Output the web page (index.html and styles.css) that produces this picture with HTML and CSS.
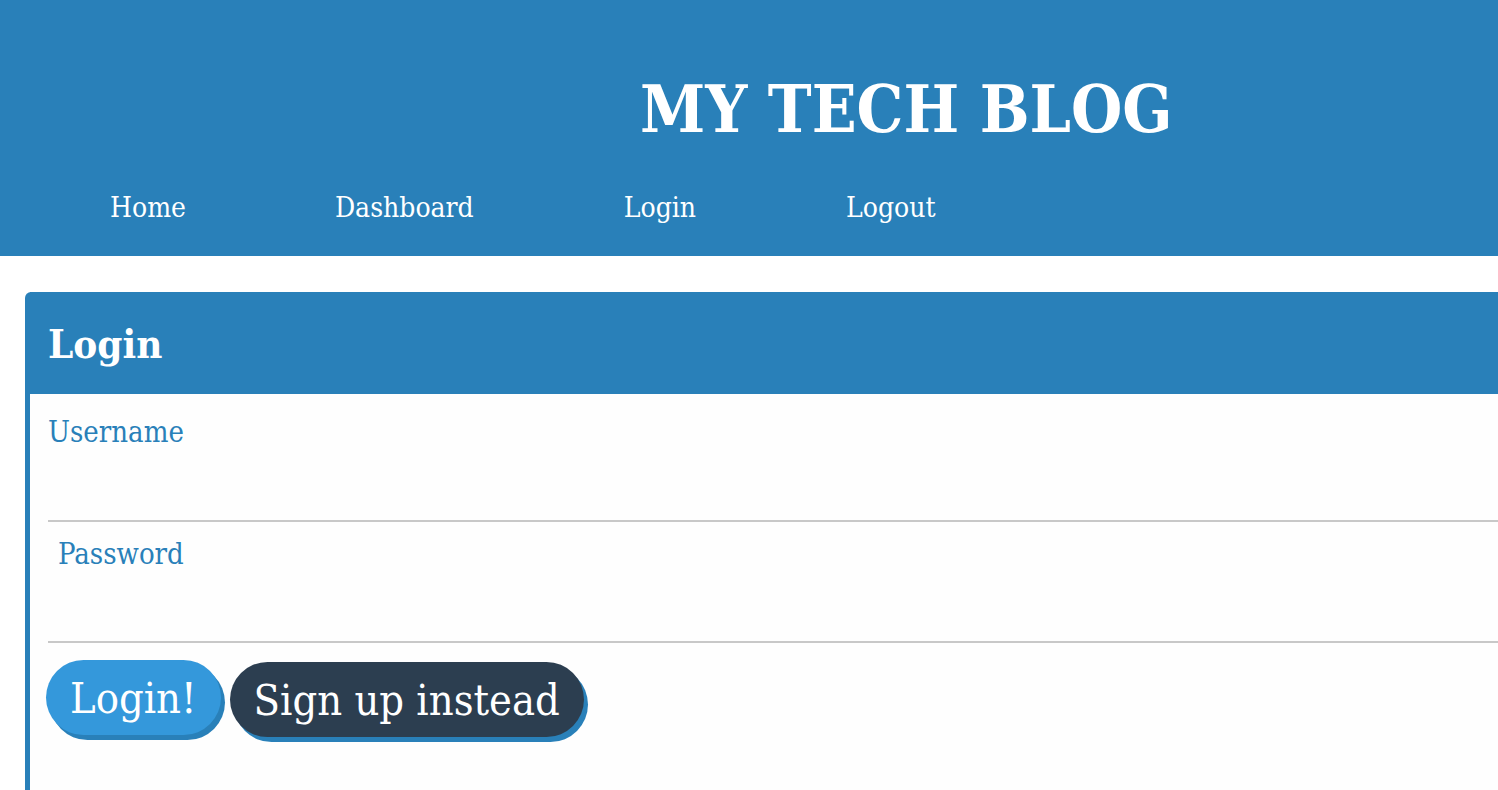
FILE: index.html
```html
<!DOCTYPE html>
<html>
<head>
<meta charset="utf-8">
<link rel="stylesheet" href="styles.css">
</head>
<body>
<header class="site-header">
  <h1 class="site-title">MY TECH BLOG</h1>
  <nav class="nav">
    <a class="nav-link nav-home" href="#">Home</a>
    <a class="nav-link nav-dash" href="#">Dashboard</a>
    <a class="nav-link nav-login" href="#">Login</a>
    <a class="nav-link nav-logout" href="#">Logout</a>
  </nav>
</header>
<main class="main">
  <section class="card">
    <div class="card-header"><h2 class="card-title">Login</h2></div>
    <form class="card-body">
      <div class="field">
        <label class="label">Username</label>
        <input class="input" type="text">
      </div>
      <div class="field field-pw">
        <label class="label">Password</label>
        <input class="input" type="password">
      </div>
      <div class="actions">
        <button class="btn btn-login" type="button">Login!</button>
        <button class="btn btn-signup" type="button">Sign up instead</button>
      </div>
    </form>
  </section>
</main>
</body>
</html>
```
FILE: styles.css
```css
html, body { margin: 0; padding: 0; overflow: hidden; }
body {
  font-family: "DejaVu Serif Condensed", "DejaVu Serif", serif;
  background: #fff;
  width: 1498px;
  height: 790px;
}
.site-header {
  background: #2980b9;
  height: 256px;
  color: #fff;
  display: flex;
  flex-direction: column;
}
.site-title {
  margin: 0;
  padding-top: 64px;
  padding-left: 640px;
  font-size: 65.5px;
  line-height: 90px;
  font-weight: bold;
  white-space: nowrap;
}
.nav {
  display: flex;
  padding-top: 36px;
  font-size: 28px;
  line-height: 36px;
}
.nav-link { color: #fff; text-decoration: none; white-space: nowrap; }
.nav-home { margin-left: 110px; }
.nav-dash { margin-left: 149px; }
.nav-login { margin-left: 150px; }
.nav-logout { margin-left: 150px; }

.main { padding-top: 36px; padding-left: 25px; }
.card {
  width: 1700px;
  height: 520px;
  background: #fefefe;
  border-left: 5px solid #2980b9;
  border-top-left-radius: 6px;
}
.card-header {
  background: #2980b9;
  height: 102px;
  display: flex;
  align-items: center;
  padding-left: 18px;
}
.card-title {
  margin: 0;
  color: #fff;
  font-size: 40px;
  font-weight: bold;
}
.card-body { padding-left: 18px; padding-top: 20px; }
.field { display: flex; flex-direction: column; }
.label {
  color: #2980b9;
  font-size: 29px;
  line-height: 36px;
  height: 36px;
}
.field-pw .label { padding-left: 10px; }
.input {
  border: none;
  border-bottom: 2px solid #c8c8c8;
  background: transparent;
  height: 70px;
  padding: 0;
  outline: none;
}
.field-pw { margin-top: 14px; }
.field-pw .input { height: 69px; }
.actions {
  display: flex;
  gap: 9px;
  margin-top: 17px;
  margin-left: -2px;
}
.btn {
  font-family: inherit;
  color: #fff;
  border: none;
  border-radius: 38px;
  font-size: 43px;
  height: 75px;
  padding: 0 24px;
  box-shadow: 4px 5px 0 #2980b9;
}
.btn-login { background: #3498db; }
.btn-signup { background: #2c3e50; margin-top: 2px; }
```
